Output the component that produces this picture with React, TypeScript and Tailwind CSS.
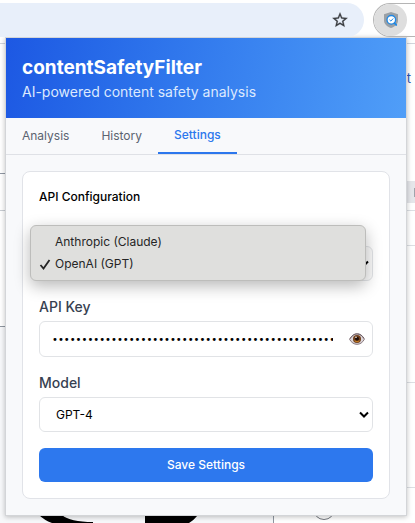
import { useState } from "react";
import { Check } from "lucide-react";

const TABS = ["Analysis", "History", "Settings"];
const PROVIDERS = ["Anthropic (Claude)", "OpenAI (GPT)"];

function ShieldIcon() {
  return (
    <svg viewBox="0 0 16 18" className="h-[18px] w-4" aria-hidden="true">
      <path d="M8 1 15 3.200v6C15 13 12 15.800 8 17 4 15.800 1 13 1 9.200v-6Z" fill="#9aa0a6" />
      <circle cx="8.300" cy="8.800" r="4.300" fill="#fff" stroke="#1e88e5" strokeWidth="1.300" />
      <path d="m11.500 12.200 1.700 1.700" stroke="#1e88e5" strokeWidth="1.900" strokeLinecap="round" />
      <path d="m6.500 8.800 1.400 1.300 2.300-2.600" fill="none" stroke="#1e88e5" strokeWidth="1" />
    </svg>
  );
}

function EyeIcon() {
  return (
    <svg viewBox="0 0 16 12" className="h-3 w-4" aria-hidden="true">
      <path d="M.6 6.400C3 2.400 5.300 1 8.200 1s5.200 1.800 7.200 5.200C13.500 9.700 11 11.300 8 11.300S2.500 9.600.6 6.400Z" fill="#ddd6da" stroke="#85767c" strokeWidth="1" />
      <path d="M1 5.600C3.400 2 5.600.8 8.200.8s4.900 1.400 6.800 4.600" fill="none" stroke="#6b5a60" strokeWidth="1" />
      <circle cx="8" cy="6" r="4" fill="#70401c" />
      <path d="M5 7.500a3.400 3.400 0 0 0 6 0Z" fill="#c27a24" />
      <circle cx="8" cy="5.800" r="2" fill="#1d0d08" />
      <circle cx="7" cy="4.200" r=".8" fill="#fff" />
    </svg>
  );
}

function StarIcon() {
  return (
    <svg viewBox="0 0 24 24" className="size-[18px]" aria-hidden="true">
      <path
        d="m22 9.240-7.190-.620L12 2 9.190 8.630 2 9.240l5.460 4.730L5.820 21 12 17.270 18.180 21l-1.630-7.030L22 9.240ZM12 15.400l-3.760 2.270 1-4.280-3.320-2.880 4.380-.380L12 6.100l1.710 4.040 4.380.380-3.320 2.880 1 4.280L12 15.400Z"
        fill="#3a3c40"
        stroke="#3a3c40"
        strokeWidth=".4"
      />
    </svg>
  );
}

function SelectArrow() {
  return (
    <svg
      viewBox="0 0 10 7"
      className="pointer-events-none mr-1 h-[7px] w-[10px] self-center justify-self-end [grid-area:1/1]"
      aria-hidden="true"
    >
      <path d="m1 1.500 4 4 4-4" fill="none" stroke="#000" strokeWidth="2" />
    </svg>
  );
}

function Toolbar() {
  return (
    <div className="flex h-[43px] gap-[9px] bg-white pt-[3px]">
      <div className="flex h-[34px] flex-1 items-center justify-end rounded-r-full bg-[#e8effa] pr-[15px]">
        <button type="button" aria-label="Bookmark this tab">
          <StarIcon />
        </button>
      </div>
      <div className="h-[34px] w-[42px] rounded-l-full border-y border-l border-[#b5b5b5]">
        <button
          type="button"
          aria-label="Open extension"
          className="flex h-8 w-[33px] items-center justify-center rounded-full bg-[#dedede]"
        >
          <ShieldIcon />
        </button>
      </div>
    </div>
  );
}

function PageBehind() {
  return (
    <div className="absolute inset-0 flex flex-col overflow-hidden bg-white pt-[43px]" aria-hidden="true">
      <div className="flex min-h-0 flex-1 border-t border-gray-300">
        <div className="flex w-[274px] flex-col">
          <div className="h-[130px] border-b border-[#9097a3]" />
          <div className="h-[37px] border-b border-[#c8ccd2]" />
          <div className="h-[115px]" />
          <div className="flex min-h-0 flex-1 flex-col justify-end border-t border-r border-[#8f96a0] bg-[#f7f8fa] pl-[38px]">
            <svg viewBox="0 0 170 8" className="h-2 w-[170px]">
              <path d="M1 0h23q8 7 31 7v1H14Q6 5 1 0ZM107 0h53q-4 5-9 8h-44Z" fill="#000" />
            </svg>
          </div>
        </div>
        <div className="flex flex-1 flex-col">
          <div className="h-[137px] pt-6 pr-1 text-right text-[13px] leading-5 text-[#2b55b5]">t</div>
          <div className="flex h-[22px] items-center justify-end bg-[#e5e6ea]">
            <div className="h-[9px] w-px bg-[#a0a3ab]" />
          </div>
          <div className="h-2 border-b border-[#dcdfe3]" />
          <div className="h-[35px] border-b border-[#dcdfe3]" />
          <div className="h-[137px] border-b border-[#dcdfe3]" />
          <div className="h-[105px] border-b border-[#dcdfe3]" />
          <div className="ml-[39px] h-8 w-[22px] rounded-full border border-[#73777e]" />
        </div>
      </div>
    </div>
  );
}

export default function App() {
  const [tab, setTab] = useState("Settings");
  const [provider, setProvider] = useState(PROVIDERS[1]);
  const [menuOpen, setMenuOpen] = useState(true);
  const [keyVisible, setKeyVisible] = useState(false);
  const [apiKey, setApiKey] = useState("0".repeat(56));

  return (
    <div className="relative min-h-screen overflow-hidden font-['Inter',sans-serif]">
      <PageBehind />
      <div className="relative">
        <Toolbar />
        <main className="-mt-[5px] mr-[9px] mb-2 ml-[6px] bg-[#f8f9fb] shadow-[0_0_0_1px_#d3d5d8,0_1px_5px_1px_#00000040]">
          <header className="h-20 bg-linear-100 from-[#1d58e3] to-[#509ef8] px-4 pt-4 text-white">
            <h1 className="text-[19px] leading-7 font-bold">contentSafetyFilter</h1>
            <p className="text-sm leading-5 text-[#dce9fe]">AI-powered content safety analysis</p>
          </header>

          <nav className="flex h-[37px] border-b border-[#dfe1e6] text-xs">
            {TABS.map((name) => (
              <button
                key={name}
                type="button"
                onClick={() => setTab(name)}
                className={
                  name === tab
                    ? "border-b-2 border-[#2c77ed] px-4 font-medium text-[#2c77ed]"
                    : "px-4 text-[#5b6370]"
                }
              >
                {name}
              </button>
            ))}
          </nav>

          <div className="p-4">
            <form
              onSubmit={(e) => e.preventDefault()}
              className="rounded-lg border border-[#e1e3e8] bg-white p-4"
            >
              <h2 className="text-xs leading-[18px] font-medium text-black">API Configuration</h2>

              <div className="relative mt-10 grid">
                <select
                  aria-label="AI provider"
                  value={provider}
                  onChange={(e) => setProvider(e.target.value)}
                  onClick={() => setMenuOpen(true)}
                  className="h-[35px] w-full appearance-none rounded-md border border-[#e1e3e6] bg-[#fafafa] px-4 text-xs [grid-area:1/1]"
                >
                  {PROVIDERS.map((name) => (
                    <option key={name}>{name}</option>
                  ))}
                </select>
                <SelectArrow />
                {menuOpen && (
                  <ul
                    role="listbox"
                    aria-label="AI provider"
                    className="absolute right-[7px] bottom-0 -left-[9px] rounded-md border border-[#bdbdbb] bg-[#dfdfdd] py-[5px] text-xs leading-[22px] text-[#252525] shadow-[0_5px_16px_#00000048]"
                  >
                    {PROVIDERS.map((name) => (
                      <li
                        key={name}
                        role="option"
                        aria-selected={name === provider}
                        onClick={() => {
                          setProvider(name);
                          setMenuOpen(false);
                        }}
                        className="flex items-center gap-1 pl-2"
                      >
                        <span className="w-3">
                          {name === provider && (
                            <svg viewBox="0 0 12 12" className="size-3" aria-hidden="true">
                              <path d="m1.500 7 3 3.500 6-8.500" fill="none" stroke="currentColor" strokeWidth="1.800" />
                            </svg>
                          )}
                        </span>
                        {name}
                      </li>
                    ))}
                  </ul>
                )}
              </div>

              <label htmlFor="api-key" className="mt-4 block text-sm leading-5 font-medium text-[#374151]">
                API Key
              </label>
              <div className="mt-1 flex h-9 items-center rounded-md border border-[#e1e3e6] pr-[7px] pl-3">
                <input
                  id="api-key"
                  type={keyVisible ? "text" : "password"}
                  value={apiKey}
                  onChange={(e) => setApiKey(e.target.value)}
                  className="mr-4 min-w-0 flex-1 font-['DejaVu_Sans',sans-serif] text-[10px] text-black outline-none"
                />
                <button type="button" aria-label="Show API key" onClick={() => setKeyVisible(!keyVisible)}>
                  <EyeIcon />
                </button>
              </div>

              <label htmlFor="model" className="mt-4 block text-sm leading-5 font-medium text-[#374151]">
                Model
              </label>
              <div className="mt-1 grid">
                <select
                  id="model"
                  className="h-[35px] w-full appearance-none rounded-md border border-[#e1e3e6] bg-white px-4 text-xs text-black [grid-area:1/1]"
                >
                  <option>GPT-4</option>
                </select>
                <SelectArrow />
              </div>

              <button
                type="submit"
                className="mt-4 h-[34px] w-full rounded-md bg-[#2d78ee] text-xs font-medium text-white"
              >
                Save Settings
              </button>
            </form>
          </div>
        </main>
      </div>
    </div>
  );
}
